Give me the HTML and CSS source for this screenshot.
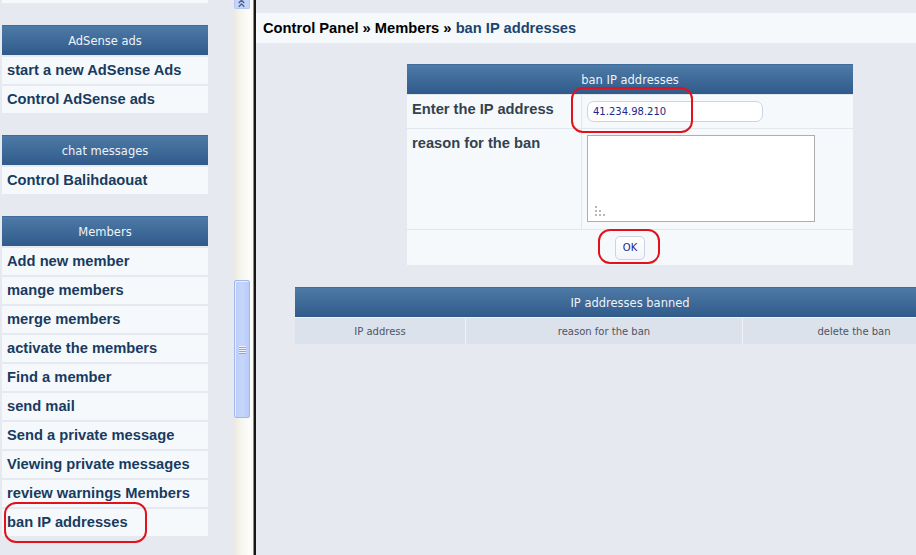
FILE: index.html
```html
<!DOCTYPE html>
<html>
<head>
<meta charset="utf-8">
<title>ban IP addresses</title>
<link rel="stylesheet" href="styles.css">
</head>
<body>
<div class="frame">
  <aside class="side">
    <nav class="menu">
      <div class="block"><div class="item cut"></div></div>
      <div class="block">
        <div class="block-head">AdSense ads</div>
        <a class="item">start a new AdSense Ads</a>
        <a class="item">Control AdSense ads</a>
      </div>
      <div class="block">
        <div class="block-head">chat messages</div>
        <a class="item">Control Balihdaouat</a>
      </div>
      <div class="block">
        <div class="block-head">Members</div>
        <a class="item">Add new member</a>
        <a class="item">mange members</a>
        <a class="item">merge members</a>
        <a class="item">activate the members</a>
        <a class="item">Find a member</a>
        <a class="item">send mail</a>
        <a class="item">Send a private message</a>
        <a class="item">Viewing private messages</a>
        <a class="item">review warnings Members</a>
        <a class="item marked">ban IP addresses<span class="mark mark-side"></span></a>
      </div>
    </nav>
    <div class="scrollbar">
      <div class="sb-btn">
        <svg width="15" height="8" viewBox="0 0 15 8"><path d="M4 3 L7 0 M7 0 L10 3 M4 7 L7 4 L10 7" stroke="#4d6185" stroke-width="1.4" fill="none"/></svg>
      </div>
      <div class="sb-thumb">
        <div class="grip"><i></i><i></i><i></i><i></i></div>
      </div>
    </div>
    <div class="sb-edge"></div>
    <div class="divider"></div>
  </aside>

  <main class="main">
    <div class="crumb">Control Panel » Members » <span class="cur">ban IP addresses</span></div>

    <div class="form-table">
      <div class="t-head span2">ban IP addresses</div>
      <div class="label">Enter the IP address</div>
      <div class="value v-ip">
        <div class="ip-wrap">
          <div class="input">41.234.98.210</div>
          <span class="mark mark-ip"></span>
        </div>
      </div>
      <div class="label l-tall">reason for the ban</div>
      <div class="value v-tall">
        <div class="textbox">
          <svg class="rgrip" width="10" height="10" viewBox="0 0 10 10">
            <rect x="0" y="0" width="2" height="2" fill="#b8b8b8"/>
            <rect x="0" y="4" width="2" height="2" fill="#b8b8b8"/>
            <rect x="4" y="4" width="2" height="2" fill="#b8b8b8"/>
            <rect x="0" y="8" width="2" height="2" fill="#b8b8b8"/>
            <rect x="4" y="8" width="2" height="2" fill="#b8b8b8"/>
            <rect x="8" y="8" width="2" height="2" fill="#b8b8b8"/>
          </svg>
        </div>
      </div>
      <div class="submit span2">
        <div class="btn-wrap">
          <button class="btn" type="button">OK</button>
          <span class="mark mark-ok"></span>
        </div>
      </div>
    </div>

    <div class="ban-table">
      <div class="t-head span3">IP addresses banned</div>
      <div class="sub">IP address</div>
      <div class="sub">reason for the ban</div>
      <div class="sub">delete the ban</div>
    </div>
  </main>
</div>
</body>
</html>
```

FILE: styles.css
```css
* { box-sizing: border-box; margin: 0; padding: 0; }
html, body { width: 916px; height: 555px; overflow: hidden; }
body {
  background: #e6e9f0;
  font-family: "Liberation Sans", Arial, sans-serif;
}
.frame { display: flex; height: 555px; }

/* sidebar */
.side { display: flex; flex: none; height: 555px; }
.menu { width: 233px; padding-left: 2px; }
.block {
  width: 206px;
  display: flex;
  flex-direction: column;
  gap: 2px;
  margin-bottom: 22px;
}
.block-head {
  height: 30px;
  background: linear-gradient(#4e7aa7, #2f5a8a);
  border-top: 1px solid #3f6c9c;
  color: #eef3f8;
  font: 11.5px "DejaVu Sans", Verdana, sans-serif;
  display: flex;
  align-items: center;
  justify-content: center;
}
.item {
  position: relative;
  height: 27px;
  background: #f6f9fb;
  display: flex;
  align-items: center;
  padding: 0 0 2px 5px;
  font-weight: bold;
  font-size: 14.7px;
  color: #183b61;
  text-decoration: none;
}
.item.cut { height: 3px; padding: 0; }

.mark {
  position: absolute;
  border: 2px solid #e3121a;
  border-radius: 12px;
  pointer-events: none;
}
.mark-side { left: 2px; top: -7px; width: 143px; height: 41px; }

/* fake scrollbar */
.scrollbar {
  width: 18px;
  height: 555px;
  background: linear-gradient(90deg, #ebe8dc, #f6f5ef 45%, #fefefc);
  display: flex;
  flex-direction: column;
  align-items: center;
}
.sb-btn {
  width: 16px;
  height: 9px;
  background: #c4d4fc;
  border: 1px solid #b3c5f1;
  border-top: none;
  border-radius: 0 0 2px 2px;
  display: flex;
  justify-content: center;
}
.sb-thumb {
  margin-top: 271px;
  width: 16px;
  height: 138px;
  background: linear-gradient(90deg, #b9cdfa, #c6d6fc 50%, #b9cbf7);
  border: 1px solid #a2b7ec;
  border-radius: 2px;
  box-shadow: inset 1px 1px 0 #e4ecff;
  display: flex;
  align-items: center;
  justify-content: center;
}
.grip { display: flex; flex-direction: column; gap: 1px; }
.grip i { display: block; width: 7px; height: 1px; background: #eef3ff; box-shadow: 0 1px 0 #8aa5e6; }
.sb-edge { width: 2px; background: #fbfaf5; }
.divider { width: 3px; background: #161616; border-left: 1px solid #8c8c8c; }

/* main */
.main {
  flex: none;
  width: 748px;
  padding-top: 13px;
}
.crumb {
  height: 30px;
  background: #f6f9fb;
  padding-left: 7px;
  display: flex;
  align-items: center;
  font-weight: bold;
  font-size: 14.7px;
  color: #000;
  white-space: pre;
}
.cur { color: #1b4570; }

.form-table {
  width: 446px;
  margin: 21px auto 0;
  display: grid;
  grid-template-columns: 174px 1fr;
  grid-template-rows: 30px 33px 100px 35px;
  gap: 1px;
  background: #e2e7ed;
}
.span2 { grid-column: span 2; }
.span3 { grid-column: span 3; }
.t-head {
  background: linear-gradient(#4e7aa7, #2f5a8a);
  border-top: 1px solid #3f6c9c;
  color: #eef3f8;
  font: 11.5px "DejaVu Sans", Verdana, sans-serif;
  display: flex;
  align-items: center;
  justify-content: center;
}
.label {
  background: #f6f9fb;
  padding: 5px 5px 0;
  font-weight: bold;
  font-size: 14.7px;
  line-height: 18px;
  color: #33424f;
}
.value {
  background: #f6f9fb;
  padding: 6px 5px 0;
}
.ip-wrap { position: relative; width: 176px; }
.input {
  width: 176px;
  height: 21px;
  background: #fff;
  border: 1px solid #cdd4e3;
  border-radius: 7px;
  padding-left: 5px;
  display: flex;
  align-items: center;
  font: 10px "DejaVu Sans", Verdana, sans-serif;
  color: #1e2888;
}
.mark-ip { left: -16px; top: -14px; width: 122px; height: 46px; }
.textbox {
  width: 228px;
  height: 87px;
  background: #fff;
  border: 1px solid #aeaeae;
  display: flex;
  align-items: flex-end;
  padding: 0 0 5px 7px;
}
.submit {
  background: #f6f9fb;
  display: flex;
  align-items: center;
  justify-content: center;
}
.btn-wrap { position: relative; }
.btn {
  width: 30px;
  height: 24px;
  background: linear-gradient(#ffffff, #f3f5fa);
  border: 1px solid #cdd3e4;
  border-radius: 5px;
  font: 10px "DejaVu Sans", Verdana, sans-serif;
  color: #1e2888;
  display: block;
}
.mark-ok { left: -17px; top: -7px; width: 62px; height: 35px; }

.ban-table {
  width: 670px;
  margin: 22px auto 0;
  display: grid;
  grid-template-columns: 170px 276px 1fr;
  grid-template-rows: 30px 26px;
  gap: 1px;
  background: #eef1f5;
}
.sub {
  background: #dce2eb;
  color: #4c5565;
  font: 10px "DejaVu Sans", Verdana, sans-serif;
  display: flex;
  align-items: center;
  justify-content: center;
}
```
